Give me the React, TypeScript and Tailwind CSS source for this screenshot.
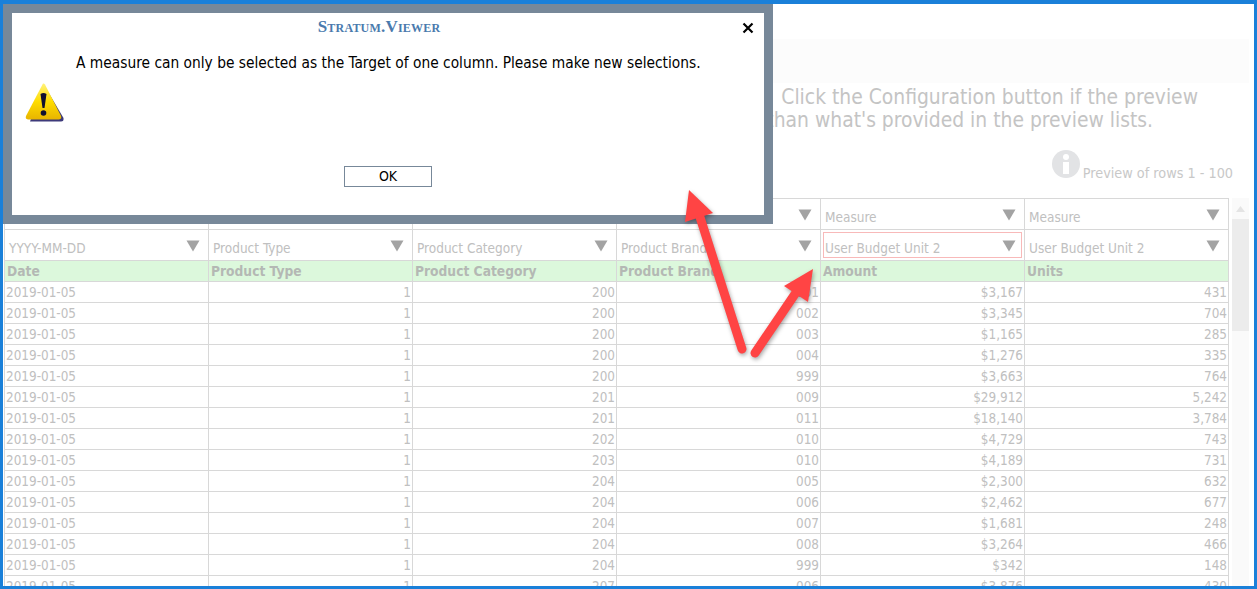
const cols = ["col1", "col2", "col3", "col4", "col5", "col6"];
const firstRow = ["Dimension", "Dimension", "Dimension", "Dimension", "Measure", "Measure"];
const secondRow = ["YYYY-MM-DD", "Product Type", "Product Category", "Product Brand", "User Budget Unit 2", "User Budget Unit 2"];
const heads = ["Date", "Product Type", "Product Category", "Product Brand", "Amount", "Units"];
const rows: string[][] = [
  ["200", "001", "$3,167", "431"],
  ["200", "002", "$3,345", "704"],
  ["200", "003", "$1,165", "285"],
  ["200", "004", "$1,276", "335"],
  ["200", "999", "$3,663", "764"],
  ["201", "009", "$29,912", "5,242"],
  ["201", "011", "$18,140", "3,784"],
  ["202", "010", "$4,729", "743"],
  ["203", "010", "$4,189", "731"],
  ["204", "005", "$2,300", "632"],
  ["204", "006", "$2,462", "677"],
  ["204", "007", "$1,681", "248"],
  ["204", "008", "$3,264", "466"],
  ["204", "999", "$342", "148"],
  ["207", "006", "$3,876", "430"],
];

function Tri() {
  return (
    <svg width="14" height="12" viewBox="0 0 14 12" className="shrink-0 mt-[2px]">
      <polygon points="0.5,0.5 13.5,0.5 7,11.5" fill="#a3a3a3" />
    </svg>
  );
}

function SelectCell({ label, active }: { label: string; active?: boolean }) {
  return (
    <div className="h-[31px] border-r border-b border-[#d8d8d8] p-[2px] bg-white">
      <div className={`h-full flex items-center justify-between pl-[1px] pr-[5px] border ${active ? "border-[#f8b9b9]" : "border-transparent"}`}>
        <span className="text-[13.5px] text-[#c0c0c0] mt-[7px]">{label}</span>
        <Tri />
      </div>
    </div>
  );
}

export default function App() {
  return (
    <div
      className="relative h-[589px] w-[1257px] overflow-hidden border-x-[3px] border-t-4 border-b-[3px] border-[#1a80d9] bg-white"
      style={{ fontFamily: '"DejaVu Sans Condensed", "DejaVu Sans", sans-serif' }}
    >
      <div className="mt-[35px] h-[44px] mr-[5px] bg-[#fcfcfc]" />
      <div className="mt-[3px] flex flex-col items-end text-[20.85px] leading-[23px] text-[#c4c4c4] whitespace-nowrap">
        <p className="mr-[56px]">Click the Configuration button if the preview</p>
        <p className="mr-[101px]">than what's provided in the preview lists.</p>
      </div>
      <div className="mt-[18px] flex items-end justify-end pr-[21px] h-[29px]">
        <svg width="28" height="28" viewBox="0 0 28 28" className="mr-[3px] mb-[1px]">
          <circle cx="14" cy="14" r="14" fill="#e2e3e5" />
          <circle cx="14" cy="7" r="3" fill="#fff" />
          <rect x="11" y="12" width="6" height="12" fill="#fff" />
        </svg>
        <span className="text-[14.3px] leading-[15px] text-[#c8c8c8] -mb-[2px]">Preview of rows 1 - 100</span>
      </div>

      <div className="mt-[19px] flex items-start">
        <div className="ml-[1px] grid w-[1225px] grid-cols-[repeat(6,204px)] border-l border-t border-[#d8d8d8]">
          {firstRow.map((t, i) => (
            <SelectCell key={cols[i] + "a"} label={t} />
          ))}
          {secondRow.map((t, i) => (
            <SelectCell key={cols[i] + "b"} label={t} active={i === 4} />
          ))}
          {heads.map((t, i) => (
            <div key={cols[i] + "h"} className="h-[21px] border-r border-b border-[#d8d8d8] bg-[#dcf8dc] pl-[2px] text-[13.7px] leading-[20px] font-bold text-[#b4b8b4]">
              {t}
            </div>
          ))}
          {rows.map((r, ri) => (
            <div key={ri} className="contents">
              <div className="h-[21px] border-r border-b border-[#d8d8d8] pl-[1px] pt-[1px] text-[13.4px] leading-[20px] text-[#c0c0c0]">2019-01-05</div>
              {["1", ...r].map((v, ci) => (
                <div key={ci} className="h-[21px] border-r border-b border-[#d8d8d8] pr-[1px] pt-[1px] text-right text-[13.4px] leading-[20px] text-[#c0c0c0]">
                  {v}
                </div>
              ))}
            </div>
          ))}
        </div>
        <div className="ml-[3px] h-[400px] w-[17px] bg-[#fafafa] flex flex-col items-center">
          <svg width="9" height="6" viewBox="0 0 9 6" className="mt-[8px]">
            <polygon points="4.5,0 9,6 0,6" fill="#e4e4e4" />
          </svg>
          <div className="mt-[7px] h-[112px] w-full bg-[#ececec]" />
        </div>
      </div>

      {/* Dialog */}
      <div className="absolute left-0 top-0 h-[220px] w-[770px] border-[9px] border-[#778899] bg-white text-black">
        <div className="relative h-full">
          <div className="pt-[6px] pr-[18px] text-center text-[17px] leading-[16px] tracking-[0.2px] font-bold text-[#4a7aad] [font-variant:small-caps]" style={{ fontFamily: '"Liberation Serif", serif' }}>
            Stratum.Viewer
          </div>
          <svg width="12" height="12" viewBox="0 0 12 12" className="absolute right-[10px] top-[9px]">
            <path d="M1.5 1.5 L10.5 10.5 M10.5 1.5 L1.5 10.5" stroke="#000" strokeWidth="2.2" />
          </svg>
          <p className="mt-[19px] ml-[64px] text-[15.35px] leading-[18px] whitespace-nowrap">
            A measure can only be selected as the Target of one column. Please make new selections.
          </p>
          <svg width="40" height="42" viewBox="0 0 40 42" className="ml-[13px] mt-[10px]">
            <defs>
              <linearGradient id="warn" x1="0" y1="0" x2="0" y2="1">
                <stop offset="0" stopColor="#fff27a" />
                <stop offset="0.5" stopColor="#ffdd00" />
                <stop offset="1" stopColor="#e8b400" />
              </linearGradient>
            </defs>
            <path d="M19 3 L38.5 36 Q39 39.5 36 39.5 L5 39.5 L19 3 Z" fill="#3d3a7a" />
            <path d="M18 1.5 Q19 1 20 2.5 L36 34 Q37 37 34 37.5 L3 37.5 Q0 37 1 34 Z" fill="url(#warn)" />
            <path d="M15.5 12 Q18.5 10 21.5 12 L19.5 26 L17.5 26 Z" fill="#101030" />
            <circle cx="18.5" cy="31" r="2.8" fill="#101030" />
          </svg>
          <div className="absolute left-[332px] top-[153px] flex h-[21px] w-[88px] items-center justify-center border border-[#778899] text-[14px]">
            OK
          </div>
        </div>
      </div>

      {/* Annotation arrows */}
      <svg width="1257" height="589" viewBox="0 0 1257 589" className="absolute -left-[3px] -top-[4px] pointer-events-none drop-shadow-[1px_2px_2px_rgba(0,0,0,0.35)]">
        <path d="M742 349 L699 214" stroke="#ff4444" strokeWidth="9" strokeLinecap="round" fill="none" />
        <polygon points="689,190 713,213 685,222" fill="#ff4444" />
        <path d="M755 353 L795 294" stroke="#ff4444" strokeWidth="9" strokeLinecap="round" fill="none" />
        <polygon points="813,269 808,302 784,286" fill="#ff4444" />
      </svg>
    </div>
  );
}
